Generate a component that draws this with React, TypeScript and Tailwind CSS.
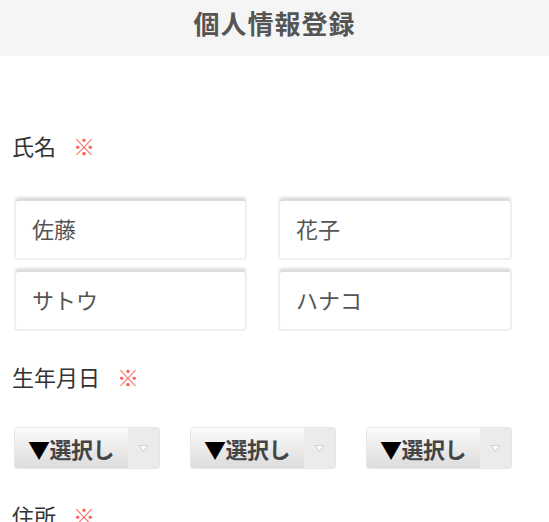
import React from "react";

const font = { fontFamily: '"Noto Sans CJK JP", "Noto Sans", sans-serif' };

function Required() {
  return <span className="ml-[17px] text-[22px] leading-[22px] text-[#ff5a5a]">※</span>;
}

function FieldLabel({ children, className }: { children: React.ReactNode; className?: string }) {
  return (
    <div className={`flex items-center pl-[12px] text-[22px] leading-[22px] text-[#333] ${className ?? ""}`}>
      <span>{children}</span>
      <Required />
    </div>
  );
}

function TextBox({ value }: { value: string }) {
  return (
    <div className="flex h-[64px] items-center rounded-[4px] border-2 border-[#f0f0f0] pl-[16px] text-[22px] leading-[22px] text-[#555] shadow-[inset_0_3px_0_#dddddd]">
      {value}
    </div>
  );
}

function SelectBox() {
  return (
    <div className="flex h-[42px] w-[146px] overflow-hidden rounded-[3px] border border-[#e6e6e6]">
      <div className="flex flex-1 items-center bg-gradient-to-b from-[#fbfbfb] to-[#dcdcdc] pl-[13px]">
        <span className="whitespace-nowrap text-[22px] font-bold leading-[22px] tracking-[-0.5px] text-[#444]">
          <span className="text-black">▼</span>選択し
        </span>
      </div>
      <div className="flex w-[31px] items-center justify-center bg-[#ebebeb]">
        <svg width="9" height="7" viewBox="0 0 9 7">
          <path d="M0.5 0.5 L8.5 0.5 L4.5 6.5 Z" fill="#ffffff" stroke="#cfcfcf" strokeWidth="1" />
        </svg>
      </div>
    </div>
  );
}

export default function App() {
  return (
    <div className="min-h-[522px] w-[549px] overflow-hidden bg-white" style={font}>
      <header className="flex h-[56px] items-start justify-center bg-[#f5f5f5] pt-[9px]">
        <h1 className="text-[26px] font-bold leading-[28px] tracking-[1px] text-[#555]">個人情報登録</h1>
      </header>

      <FieldLabel className="mt-[78px]">氏名</FieldLabel>

      <div className="mt-[40px] grid grid-cols-[233px_234px] gap-x-[31px] gap-y-[7px] pl-[14px]">
        <TextBox value="佐藤" />
        <TextBox value="花子" />
        <TextBox value="サトウ" />
        <TextBox value="ハナコ" />
      </div>

      <FieldLabel className="mt-[34px]">生年月日</FieldLabel>

      <div className="mt-[40px] box-content flex w-[498px] justify-between pl-[14px]">
        <SelectBox />
        <SelectBox />
        <SelectBox />
      </div>

      <FieldLabel className="mt-[35px]">住所</FieldLabel>
    </div>
  );
}
